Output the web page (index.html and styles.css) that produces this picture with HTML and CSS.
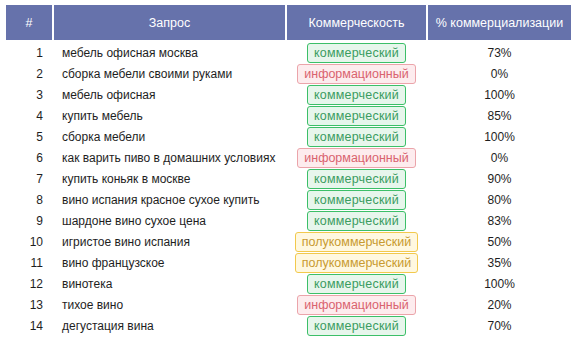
FILE: index.html
```html
<!DOCTYPE html>
<html lang="ru">
<head>
<meta charset="utf-8">
<title>Коммерческость запросов</title>
<link rel="stylesheet" href="styles.css">
</head>
<body>
<div class="wrap">
<table class="tbl">
<thead>
<tr><th class="c-num">#</th><th class="c-q">Запрос</th><th class="c-type">Коммерческость</th><th class="c-pct">% коммерциализации</th></tr>
</thead>
<tbody>
<tr><td class="c-num">1</td><td class="c-q">мебель офисная москва</td><td class="c-type"><span class="badge com">коммерческий</span></td><td class="c-pct">73%</td></tr>
<tr><td class="c-num">2</td><td class="c-q">сборка мебели своими руками</td><td class="c-type"><span class="badge inf">информационный</span></td><td class="c-pct">0%</td></tr>
<tr><td class="c-num">3</td><td class="c-q">мебель офисная</td><td class="c-type"><span class="badge com">коммерческий</span></td><td class="c-pct">100%</td></tr>
<tr><td class="c-num">4</td><td class="c-q">купить мебель</td><td class="c-type"><span class="badge com">коммерческий</span></td><td class="c-pct">85%</td></tr>
<tr><td class="c-num">5</td><td class="c-q">сборка мебели</td><td class="c-type"><span class="badge com">коммерческий</span></td><td class="c-pct">100%</td></tr>
<tr><td class="c-num">6</td><td class="c-q">как варить пиво в домашних условиях</td><td class="c-type"><span class="badge inf">информационный</span></td><td class="c-pct">0%</td></tr>
<tr><td class="c-num">7</td><td class="c-q">купить коньяк в москве</td><td class="c-type"><span class="badge com">коммерческий</span></td><td class="c-pct">90%</td></tr>
<tr><td class="c-num">8</td><td class="c-q">вино испания красное сухое купить</td><td class="c-type"><span class="badge com">коммерческий</span></td><td class="c-pct">80%</td></tr>
<tr><td class="c-num">9</td><td class="c-q">шардоне вино сухое цена</td><td class="c-type"><span class="badge com">коммерческий</span></td><td class="c-pct">83%</td></tr>
<tr><td class="c-num">10</td><td class="c-q">игристое вино испания</td><td class="c-type"><span class="badge semi">полукоммерческий</span></td><td class="c-pct">50%</td></tr>
<tr><td class="c-num">11</td><td class="c-q">вино французское</td><td class="c-type"><span class="badge semi">полукоммерческий</span></td><td class="c-pct">35%</td></tr>
<tr><td class="c-num">12</td><td class="c-q">винотека</td><td class="c-type"><span class="badge com">коммерческий</span></td><td class="c-pct">100%</td></tr>
<tr><td class="c-num">13</td><td class="c-q">тихое вино</td><td class="c-type"><span class="badge inf">информационный</span></td><td class="c-pct">20%</td></tr>
<tr><td class="c-num">14</td><td class="c-q">дегустация вина</td><td class="c-type"><span class="badge com">коммерческий</span></td><td class="c-pct">70%</td></tr>
</tbody>
</table>
</div>
</body>
</html>
```
FILE: styles.css
```css
html, body {
  margin: 0;
  padding: 0;
  background: #fff;
}
.wrap {
  padding: 5px 4px 0 4px;
}
.tbl {
  border-collapse: separate;
  border-spacing: 2px 0;
  font-family: "Liberation Sans", Arial, sans-serif;
  font-size: 12px;
  color: #1e1e1e;
  table-layout: fixed;
  width: 569px;
}
.tbl th {
  background: #6672ab;
  background-clip: padding-box;
  color: #fff;
  font-size: 12.5px;
  font-weight: normal;
  height: 35px;
  padding: 0;
  border-bottom: 2px solid #fff;
  text-align: center;
  vertical-align: middle;
}
.tbl td {
  height: 21px;
  padding: 0;
  vertical-align: middle;
  white-space: nowrap;
}
.tbl th.c-num { width: 46px; }
.tbl th.c-q { width: 231px; }
.tbl th.c-type { width: 139px; }
.tbl th.c-pct { width: 143px; }
td.c-num {
  text-align: right;
  padding-right: 9px;
}
td.c-q {
  text-align: left;
  padding-left: 8px;
}
td.c-type {
  text-align: center;
}
td.c-pct {
  text-align: center;
}
.badge {
  display: inline-block;
  box-sizing: border-box;
  height: 20px;
  line-height: 18px;
  padding: 0 6px;
  border: 1px solid;
  border-radius: 3px;
  font-size: 12.5px;
  vertical-align: middle;
}
.com {
  background: #e7f6ec;
  border-color: #3cbf68;
  color: #3b9c61;
  letter-spacing: 0.2px;
}
.inf {
  background: #fdecee;
  border-color: #eba4aa;
  color: #d9636e;
}
.semi {
  background: #fff8e0;
  border-color: #f2c94c;
  color: #c89a30;
}
```
